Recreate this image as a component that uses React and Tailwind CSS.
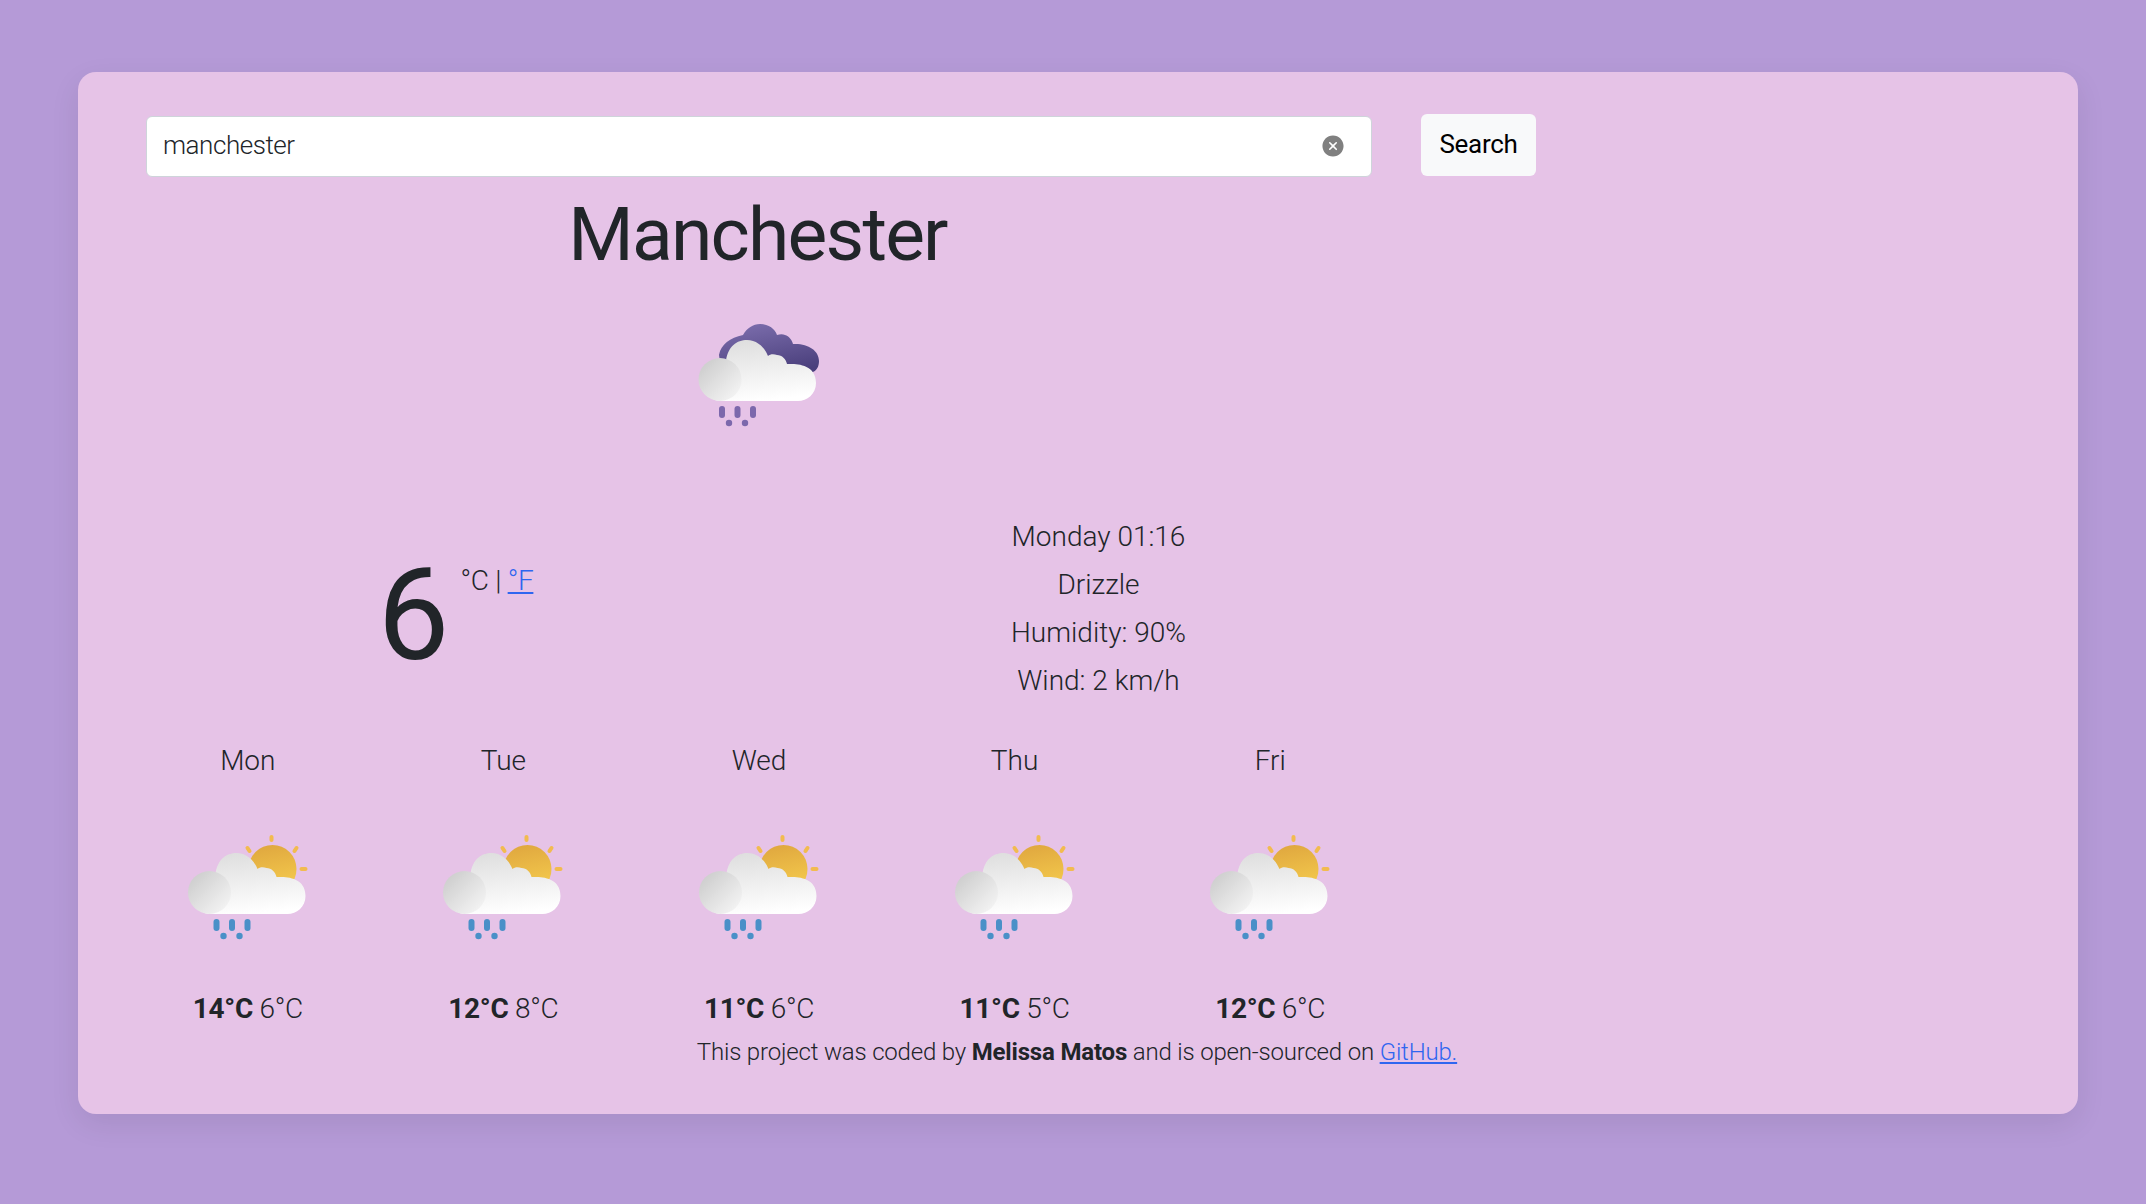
import React from "react";
import { IoCloseCircle } from "react-icons/io5";

const forecast = [
  { day: "Mon", high: 14, low: 6 },
  { day: "Tue", high: 12, low: 8 },
  { day: "Wed", high: 11, low: 6 },
  { day: "Thu", high: 11, low: 5 },
  { day: "Fri", high: 12, low: 6 },
];

function Cloud({ id }) {
  return (
    <>
      <defs>
        <linearGradient id={`${id}-body`} x1="0.3" y1="0" x2="0.5" y2="1">
          <stop offset="0" stopColor="#dedede" />
          <stop offset="1" stopColor="#ffffff" />
        </linearGradient>
        <linearGradient id={`${id}-puff`} x1="0.1" y1="0.1" x2="0.9" y2="0.9">
          <stop offset="0" stopColor="#cdcdcd" />
          <stop offset="1" stopColor="#f4f4f4" />
        </linearGradient>
      </defs>
      <path
        d="M40 93 C20 93 20 52 40 52 C42 52 44 52 46 53 C48 38 57 32 67 32 C76 32 84 38 88 48 C90 46 94 46 97 47 C102 47 106 51 107 56 C112 56 136 54 136 75 C136 86 127 93 118 93 Z"
        fill={`url(#${id}-body)`}
      />
      <circle cx="40" cy="71.5" r="21.5" fill={`url(#${id}-puff)`} />
    </>
  );
}

function Drops({ color }) {
  return (
    <g fill={color}>
      <rect x="44" y="98" width="6" height="12" rx="3" />
      <rect x="59.5" y="98" width="6" height="12" rx="3" />
      <rect x="75" y="98" width="6" height="12" rx="3" />
      <circle cx="54" cy="115" r="3.2" />
      <circle cx="70" cy="115" r="3.2" />
    </g>
  );
}

function NightRainIcon() {
  return (
    <svg viewBox="0 0 160 140" className="w-[160px] h-[140px] blur-[0.7px]">
      <defs>
        <linearGradient id="night-back" x1="0.3" y1="0" x2="0.7" y2="1">
          <stop offset="0" stopColor="#7a6cab" />
          <stop offset="1" stopColor="#4a3f7c" />
        </linearGradient>
      </defs>
      <g transform="translate(1 0)">
        <path
          d="M39 53 C41 42 50 36 63 33 C67 26 73 22 80 22 C89 22 95 27 97 33 C100 32 103 32 105 33 C109 34 112 38 113 42 C127 41 139 48 139 59 C139 64 137 68 133 70 L90 70 L40 60 Z"
          fill="url(#night-back)"
        />
        <g transform="translate(0 6)">
          <Cloud id="night" />
        </g>
        <g transform="translate(-5 6)">
          <Drops color="#7c68ac" />
        </g>
      </g>
    </svg>
  );
}

function SunRainIcon({ id }) {
  return (
    <svg viewBox="0 0 160 140" className="w-[160px] h-[140px] blur-[0.7px]">
      <defs>
        <linearGradient id={`${id}-sun`} x1="0.4" y1="0" x2="0.6" y2="1">
          <stop offset="0" stopColor="#e0a83f" />
          <stop offset="1" stopColor="#f6cd4e" />
        </linearGradient>
      </defs>
      <g transform="translate(1.5 0)">
        <circle cx="103" cy="48" r="24" fill={`url(#${id}-sun)`} />
        <g stroke="#f2bb4f" strokeWidth="4" strokeLinecap="round">
          <line x1="102" y1="16" x2="102" y2="19" />
          <line x1="78" y1="27" x2="80" y2="30" />
          <line x1="127" y1="27" x2="125" y2="30" />
          <line x1="132" y1="48" x2="136" y2="48" />
        </g>
        <Cloud id={id} />
        <Drops color="#4a90c8" />
      </g>
    </svg>
  );
}

export default function App() {
  return (
    <div className="min-h-[1204px] bg-[#b59ad7] pt-[72px] pl-[78px] text-[#212529] font-['Roboto',sans-serif] font-light">
      <div className="w-[2000px] h-[1042px] rounded-[18px] bg-[#e6c3e7] shadow-[0_10px_30px_rgba(0,0,0,0.08)] pt-[42px] pl-[42px]">
        <div className="w-[1278px]">
          <form className="flex items-start pl-[26px] w-[1500px]">
            <div className="relative shrink-0 w-[1226px] h-[61px] mt-[2px] rounded-[6px] border border-[#ced4da] bg-white flex items-center pl-[16px] pb-[2px] text-[26px] tracking-[-0.45px]">
              manchester
              <IoCloseCircle className="absolute right-[25px] top-[16px] text-[#808080] text-[26px]" />
            </div>
            <button type="button" className="shrink-0 ml-[49px] w-[115px] h-[62px] rounded-[6px] bg-[#f8f9fa] pb-[2px] text-[26px] tracking-[-0.3px] font-normal text-black">
              Search
            </button>
          </form>

          <h1 className="text-center text-[75px] leading-[96px] mt-[9px] pr-[3px] tracking-[-1.8px] font-normal">Manchester</h1>

          <div className="flex justify-center mt-[20px]">
            <NightRainIcon />
          </div>

          <div className="flex mt-[75px] h-[220px]">
            <div className="w-[639px] flex justify-center pt-[34px] pl-[32px]">
              <span className="text-[128px] leading-[128px] font-normal">6</span>
              <span className="text-[28px] leading-[40px] ml-[11px] mt-[10px] tracking-[-0.3px]">
                °C | <a href="#f" className="text-[#2f66f0] underline">°F</a>
              </span>
            </div>
            <ul className="w-[639px] pl-[40px] text-center text-[28px] leading-[48px] mt-[-4px]">
              <li>Monday 01:16</li>
              <li>Drizzle</li>
              <li>Humidity: 90%</li>
              <li>Wind: 2 km/h</li>
            </ul>
          </div>

          <div className="grid grid-cols-5 mt-[2px]">
            {forecast.map((f) => (
              <div key={f.day} className="flex flex-col items-center">
                <div className="text-[28px] leading-[44px]">{f.day}</div>
                <div className="mt-[38px]">
                  <SunRainIcon id={f.day} />
                </div>
                <div className="text-[28px] leading-[44px] mt-[26px] tracking-[-0.3px]">
                  <strong className="font-bold">{f.high}°C</strong> {f.low}°C
                </div>
              </div>
            ))}
          </div>
        </div>
        <p className="w-[1914px] mt-[3px] text-center text-[24px] leading-[36px] tracking-[-0.18px]">
          This project was coded by <strong className="font-bold">Melissa Matos</strong> and is open-sourced on{" "}
          <a href="#gh" className="text-[#2f66f0] underline">GitHub.</a>
        </p>
      </div>
    </div>
  );
}
